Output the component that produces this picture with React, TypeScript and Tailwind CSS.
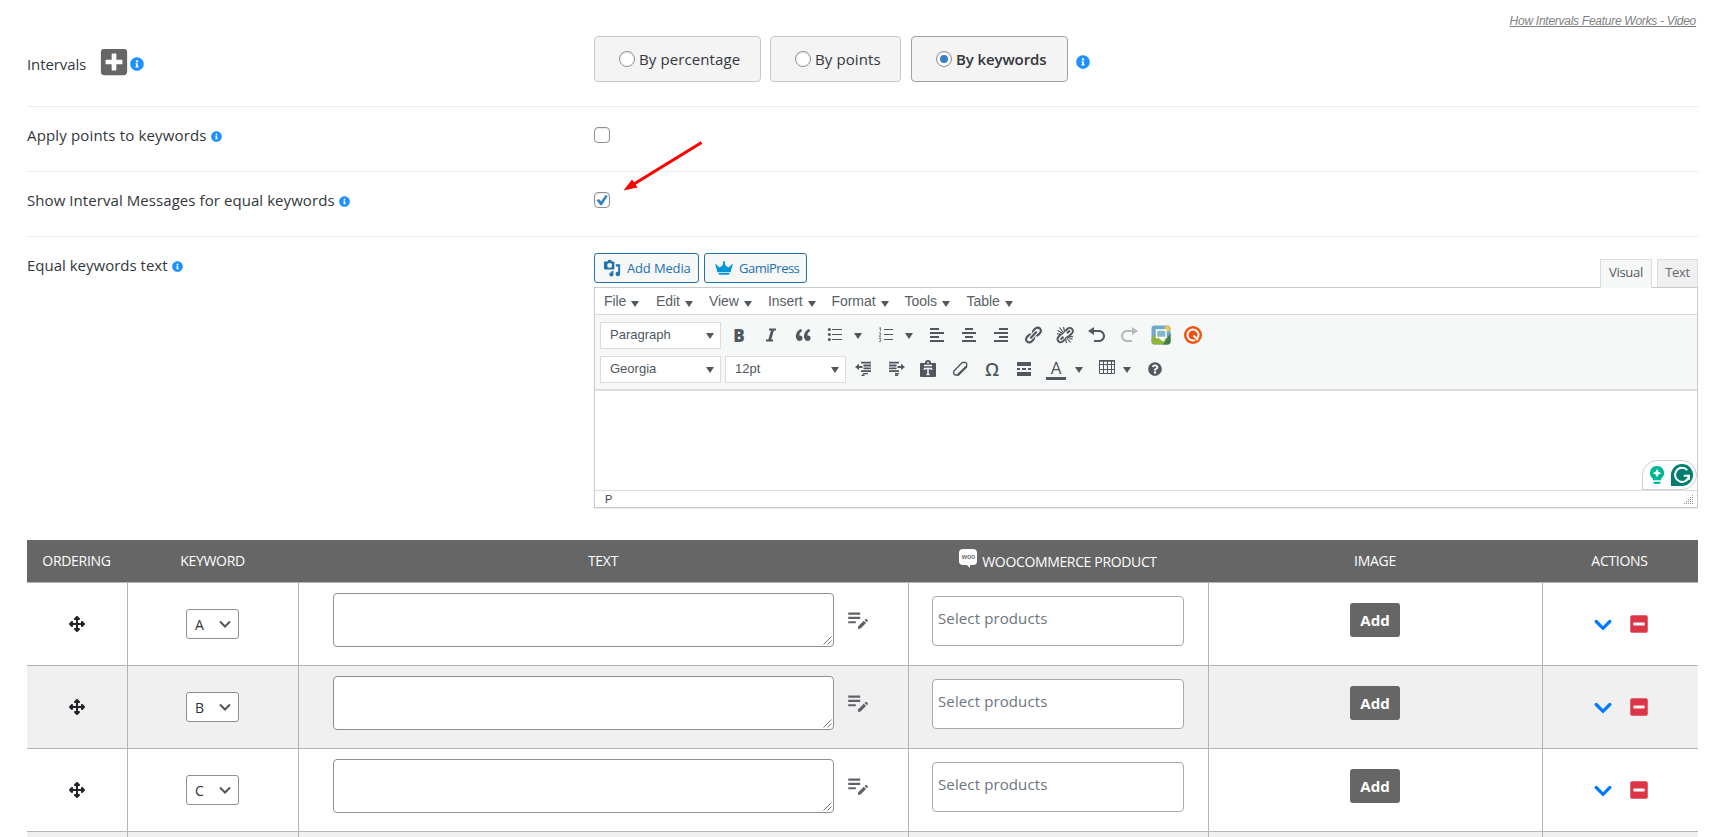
import { useState } from "react";
import { FaInfoCircle, FaMinusSquare, FaPlusSquare, FaQuestionCircle } from "react-icons/fa";
import { FaUpDownLeftRight } from "react-icons/fa6";
import { MdEditNote } from "react-icons/md";

const MENUS = [
  { label: "File", width: "w-[52px]" },
  { label: "Edit", width: "w-[53px]" },
  { label: "View", width: "w-[59px]" },
  { label: "Insert", width: "w-[63.5px]" },
  { label: "Format", width: "w-[73px]" },
  { label: "Tools", width: "w-[62px]" },
  { label: "Table", width: "w-[60px]" },
];

function Caret() {
  return <span className="block size-0 border-x-4 border-t-[6px] border-x-transparent border-t-[#50575e]" />;
}

function Icon({ d, className }: { d: string; className?: string }) {
  return (
    <svg viewBox="0 0 20 20" className={`size-5 ${className ?? "text-[#50575e]"}`} fill="currentColor">
      <path d={d} />
    </svg>
  );
}

function ToolButton({ children }: { children: React.ReactNode }) {
  return <button className="flex h-[30px] w-8 shrink-0 items-center justify-center text-[#50575e]">{children}</button>;
}

function SplitButton({ children, className }: { children: React.ReactNode; className: string }) {
  return (
    <div className={`flex h-[30px] shrink-0 items-center ${className}`}>
      <ToolButton>{children}</ToolButton>
      <span className="mt-0.5">
        <Caret />
      </span>
    </div>
  );
}

function ListBox({ label }: { label: string }) {
  return (
    <div className="flex h-[27px] w-[121px] shrink-0 items-center justify-between border border-[#dcdcde] bg-white pl-[9px] pr-[6px] text-[13px] text-[#50575e]">
      <span>{label}</span>
      <span className="mt-0.5">
        <Caret />
      </span>
    </div>
  );
}

function Info({ small }: { small?: boolean }) {
  return <FaInfoCircle className={`shrink-0 text-[#1e90ff] ${small ? "mt-0.5 size-[11px]" : "size-[14px]"}`} />;
}

function Radio({
  label,
  checked,
  onSelect,
  className,
  textClass,
}: {
  label: string;
  checked: boolean;
  onSelect: () => void;
  className: string;
  textClass: string;
}) {
  return (
    <label
      onClick={onSelect}
      className={`flex h-[46px] items-center rounded border bg-[#f4f4f4] pl-6 ${
        checked ? "border-[#a0a0a0]" : "border-[#c9c9c9]"
      } ${className}`}
    >
      <span className="flex size-4 shrink-0 items-center justify-center rounded-full border border-[#8c8f94] bg-white shadow-[inset_0_1px_2px_rgba(0,0,0,0.1)]">
        {checked && <span className="size-2 rounded-full bg-[#3582c4]" />}
      </span>
      <span className={`ml-1 whitespace-nowrap ${textClass}`}>{label}</span>
    </label>
  );
}

function CheckBox({ defaultChecked }: { defaultChecked?: boolean }) {
  const [checked, setChecked] = useState(!!defaultChecked);

  return (
    <button
      onClick={() => setChecked(!checked)}
      className="flex size-4 items-center justify-center rounded border border-[#8c8f94] bg-white shadow-[inset_0_1px_2px_rgba(0,0,0,0.1)]"
    >
      {checked && (
        <svg viewBox="0 0 14 14" className="size-3.5 shrink-0" fill="#3582c4">
          <path d="M1.500 7.200 3.800 6l2.300 2.200L10.600 2l2.100 1.100L6.900 12.300H5.400z" />
        </svg>
      )}
    </button>
  );
}

function Toolbar() {
  return (
    <div className="h-[76px] border-b-2 border-[#dcdcde] bg-[#f6f7f7] pl-[5px] pt-[5px]">
      <div className="flex h-[30px] items-center">
        <ListBox label="Paragraph" />
        <div className="ml-[2px] flex">
          <ToolButton>
            <span className="font-['Open_Sans',sans-serif] text-[17px] font-extrabold leading-none">B</span>
          </ToolButton>
          <ToolButton>
            <svg viewBox="0 0 20 20" className="size-5" stroke="currentColor" strokeWidth="2" fill="none">
              <path d="M8 4.500h7M5 15.500h7" />
              <path d="M11.700 4.500 8.500 15.500" strokeWidth="2.700" />
            </svg>
          </ToolButton>
          <ToolButton>
            <Icon d="M9.49 13.22c0-.74-.2-1.38-.61-1.9-.62-.78-1.83-.88-2.53-.72-.29-1.65 1.11-3.75 2.92-4.65L7.88 4c-2.73 1.3-5.42 4.28-4.96 8.05C3.21 14.43 4.59 16 6.54 16c.85 0 1.56-.25 2.12-.75s.83-1.18.83-2.03zm8.05 0c0-.74-.2-1.38-.61-1.9-.63-.78-1.83-.88-2.53-.72-.29-1.65 1.11-3.75 2.92-4.65L15.93 4c-2.73 1.3-5.41 4.28-4.95 8.05.29 2.38 1.66 3.95 3.61 3.95.85 0 1.56-.25 2.12-.75s.83-1.18.83-2.03z" />
          </ToolButton>
          <SplitButton className="w-[51px] gap-[3px]">
            <svg viewBox="0 0 20 20" className="size-5" fill="currentColor">
              <path d="M7 4h10v1H7zM7 9h10v1H7zM7 14h10v1H7z" />
              <circle cx="4.4" cy="4.5" r="1.5" />
              <circle cx="4.4" cy="9.5" r="1.5" />
              <circle cx="4.4" cy="14.5" r="1.5" />
            </svg>
          </SplitButton>
          <SplitButton className="w-[51px] gap-[3px]">
            <svg viewBox="0 0 20 20" className="size-5" stroke="currentColor" fill="none">
              <path d="M8 4.5h9M8 9.5h9M8 14.5h9" />
              <path d="M3.2 3.3 4.4 2.6v3.6M3 8h1.8v1.5L3.2 11.3H5M3 13.2h1.8L3.9 14.7l.9.8-.5 1.1H3" strokeWidth=".8" />
            </svg>
          </SplitButton>
          <ToolButton>
            <Icon d="M12 5V3H3v2h9zm5 4V7H3v2h14zm-5 4v-2H3v2h9zm5 4v-2H3v2h14z" />
          </ToolButton>
          <ToolButton>
            <Icon d="M14 5V3H6v2h8zm3 4V7H3v2h14zm-3 4v-2H6v2h8zm3 4v-2H3v2h14z" />
          </ToolButton>
          <ToolButton>
            <Icon d="M17 5V3H8v2h9zm0 4V7H3v2h14zm0 4v-2H8v2h9zm0 4v-2H3v2h14z" />
          </ToolButton>
          <ToolButton>
            <Icon d="M17.74 2.76c1.68 1.69 1.68 4.41 0 6.1l-1.53 1.52c-1.12 1.12-2.7 1.47-4.14 1.09l2.62-2.61.76-.77.76-.76c.84-.84.84-2.2 0-3.04-.84-.85-2.2-.85-3.04 0l-.77.76-3.38 3.38c-.37-1.44-.02-3.02 1.1-4.14l1.52-1.53c1.69-1.68 4.42-1.68 6.1 0zM8.59 13.43l5.34-5.34c.42-.42.42-1.1 0-1.52-.44-.43-1.13-.39-1.53 0l-5.33 5.34c-.42.42-.42 1.1 0 1.52.44.43 1.13.39 1.52 0zm-.76 2.29l4.14-4.15c.38 1.44.03 3.02-1.09 4.14l-1.52 1.53c-1.69 1.68-4.41 1.68-6.1 0-1.68-1.68-1.68-4.42 0-6.1l1.53-1.52c1.12-1.12 2.7-1.47 4.14-1.1l-4.14 4.15c-.85.84-.85 2.2 0 3.05.84.84 2.2.84 3.04 0z" />
          </ToolButton>
          <ToolButton>
            <svg viewBox="0 0 20 20" className="size-5" stroke="currentColor" fill="none" strokeWidth="2">
              <path d="m10.500 6 2-2.200a3.100 3.100 0 0 1 4.400 4.600L14 11.200M6 9.300l-2.500 2.500a3.100 3.100 0 0 0 4.400 4.600l2-2.300M12 8.200 15 5.500M5.500 14.500l3-2.800" />
              <path d="M2.500 5.500 8.500 8.800M4.500 2.500l4.300 5.500M8.500 2l1.300 5.500M2 8.800l5.500.6M17.500 14.500 11.500 11.300M15.500 17.500 11.200 12M11.500 18l-1.200-5.500M18 11.800l-5.500-.8" strokeWidth="1.200" />
            </svg>
          </ToolButton>
          <ToolButton>
            <Icon d="M12 5H7V2L1 6l6 4V7h5c2.2 0 4 1.8 4 4s-1.8 4-4 4H7v2h5c3.3 0 6-2.7 6-6s-2.7-6-6-6z" />
          </ToolButton>
          <ToolButton>
            <Icon
              className="text-[#b5b8bb]"
              d="M8 5h5V2l6 4-6 4V7H8c-2.2 0-4 1.8-4 4s1.8 4 4 4h5v2H8c-3.3 0-6-2.7-6-6s2.7-6 6-6z"
            />
          </ToolButton>
          <ToolButton>
            <svg viewBox="0 0 20 20" className="size-5">
              <rect x=".5" y=".5" width="19" height="19" rx="3" fill="#6fa8cf" />
              <circle cx="16.500" cy="3.500" r="3" fill="#e9c154" />
              <path d="M.5 13 6 8l13.500 5v4a3 3 0 0 1-3 2.500h-13a3 3 0 0 1-3-2.500z" fill="#8cb83a" />
              <path d="M12 19.500 19.500 8v9a3 3 0 0 1-3 2.500z" fill="#3f7d4c" />
              <path d="M5.500 5h9.500v7.500H5.500z" fill="#86b4c9" stroke="#fff" strokeWidth="1.400" />
              <path d="M7.500 12.500h7l-1.500 4-2.500-1z" fill="#fff" />
            </svg>
          </ToolButton>
          <ToolButton>
            <svg viewBox="0 0 20 20" className="size-5" fill="none">
              <circle cx="10" cy="10" r="9" fill="#f0530f" />
              <circle cx="10" cy="10" r="5.500" stroke="#fff" strokeWidth="2" />
              <path d="m11.500 13.500 3 3" stroke="#f0530f" strokeWidth="1.500" />
              <path d="m10.500 10.500 4.500 4.500" stroke="#fff" strokeWidth="2" />
            </svg>
          </ToolButton>
        </div>
      </div>
      <div className="mt-1 flex h-[30px] items-center">
        <ListBox label="Georgia" />
        <div className="w-1 shrink-0" />
        <ListBox label="12pt" />
        <div className="ml-0.5 flex">
          <ToolButton>
            <Icon d="M7 2.800h10v1.800H7zM9.500 5.600H17v1.800H9.500zM9.500 8.400H17v1.800H9.500zM7 11.200h10V13H7zM9 14h5v1.300H9zM7.500 15.600h3V17h-3zM5 4.800v2.100h3.500v2H5V11L1 7.900z" />
          </ToolButton>
          <ToolButton>
            <Icon d="M3 2.800h10v1.800H3zM3 5.600h7.500v1.800H3zM3 8.400h7.500v1.800H3zM3 11.200h10V13H3zM9 14h4v1.300H9zM9 15.600h3V17H9zM15 4.800v2.100h-3.500v2H15V11l4-3.100z" />
          </ToolButton>
          <ToolButton>
            <svg viewBox="0 0 20 20" className="size-5">
              <path d="M7 4a3 3 0 0 1 6 0h4a1 1 0 0 1 1 1v12a1 1 0 0 1-1 1H3a1 1 0 0 1-1-1V5a1 1 0 0 1 1-1z" fill="currentColor" />
              <path d="M6 6.500h8M6.500 11v-1.500h7V11M10 9.500v6M8.500 15.500h3" stroke="#f6f7f7" strokeWidth="1.500" fill="none" />
              <circle cx="10" cy="3.700" r=".9" fill="#f6f7f7" />
            </svg>
          </ToolButton>
          <ToolButton>
            <svg viewBox="0 0 20 20" className="size-5" fill="none" stroke="currentColor" strokeWidth="1.300">
              <path d="M12.300 3.500h3.400l1 1v3L8.500 16H5l-1.300-1.500v-2.200z" strokeLinejoin="round" />
              <path d="M7.500 16.200 16.500 7.500" strokeWidth="2.200" />
            </svg>
          </ToolButton>
          <ToolButton>
            <span className="font-['Open_Sans',sans-serif] text-[18px] font-semibold leading-none">Ω</span>
          </ToolButton>
          <ToolButton>
            <Icon d="M17 7V3H3v4h14zM6 11V9H3v2h3zm6 0V9H8v2h4zm5 0V9h-3v2h3zm0 6v-4H3v4h14z" />
          </ToolButton>
          <SplitButton className="w-[51px] gap-[3px]">
            <span className="mt-0.5 flex h-[19px] w-5 items-end justify-center border-b-[3px] border-[#50575e] pb-px text-[16px] leading-[15px]">
              A
            </span>
          </SplitButton>
          <SplitButton className="w-12">
            <svg viewBox="0 0 20 20" className="-mt-1 size-5" fill="none" stroke="currentColor">
              <path d="M2.500 3.500h15v13h-15zM2 7.500h16M2 12.500h16M6.500 4v12M10.500 4v12M14.500 4v12" />
              <path d="M2 4h16" strokeWidth="1.500" />
            </svg>
          </SplitButton>
          <ToolButton>
            <FaQuestionCircle className="size-3.5" />
          </ToolButton>
        </div>
      </div>
    </div>
  );
}

function Editor() {
  return (
    <div className="w-[1104px] pt-4">
      <div className="flex h-[34px] items-start justify-between">
        <div className="flex gap-[5px] text-[13px] text-[#2271b1]">
          <button className="flex h-[30px] w-[105px] shrink-0 items-center rounded-[3px] border border-[#2271b1] bg-[#f6f7f7] pl-2">
            <svg viewBox="0 0 20 20" className="size-[19px] shrink-0" fill="currentColor">
              <path
                fillRule="evenodd"
                d="M3 2.500h1.500l1-1.500h3l1 1.500H11a1 1 0 0 1 1 1V10a1 1 0 0 1-1 1H2a1 1 0 0 1-1-1V3.500a1 1 0 0 1 1-1zm4 1.700a2.600 2.600 0 1 0 0 5.200 2.600 2.600 0 0 0 0-5.200z"
              />
              <path d="M13.500 5.500H18V16a2.400 2.400 0 1 1-2-2.500V8h-2.500zM11 12.500v4A2.200 2.200 0 1 1 9 14v-1.500z" />
            </svg>
            <span className="ml-[5px] whitespace-nowrap tracking-[-0.15px]">Add Media</span>
          </button>
          <button className="flex h-[30px] w-[103px] shrink-0 items-center rounded-[3px] border border-[#2271b1] bg-[#f6f7f7] pl-[10px]">
            <svg viewBox="0 0 18 14" className="h-[14px] w-[18px] shrink-0" fill="#0096d6">
              <path d="M0 2.500 4.700 6.500 7.500 4.500 8.200 2.200 7.600 1.200 9 0l1.400 1.200-.6 1 .7 2.300 2.800 2L18 2.500l-2.500 8.700H2.500zM3 12h12l-1.500 1.700h-9z" />
            </svg>
            <span className="ml-1.5 whitespace-nowrap tracking-[-0.5px]">GamiPress</span>
          </button>
        </div>
        <div className="mt-1.5 flex gap-[5px] text-[13px]">
          <span className="relative z-10 flex h-[29px] w-[52px] items-center justify-center border border-b-0 border-[#dcdcde] bg-[#f6f7f7] pb-1 tracking-[-0.3px] text-[#50575e]">
            Visual
          </span>
          <span className="flex h-7 w-[41px] items-center justify-center border border-b-0 border-[#dcdcde] bg-[#f0f0f1] pb-[3px] tracking-[-0.3px] text-[#646970]">
            Text
          </span>
        </div>
      </div>
      <div className="border border-[#c9cacc] bg-white font-['Liberation_Sans',Arial,sans-serif] shadow-[0_1px_1px_rgba(0,0,0,0.08)]">
        <div className="flex h-[27px] items-center border-b border-[#dcdcde] pl-[9px] text-[14px] tracking-[-0.05px] text-[#595f66]">
          {MENUS.map((menu) => (
            <span key={menu.label} className={`flex shrink-0 items-center gap-[5px] ${menu.width}`}>
              {menu.label}
              <span className="mt-[5px]">
                <Caret />
              </span>
            </span>
          ))}
        </div>
        <Toolbar />
        <div className="flex h-[99px] items-end justify-end">
          <div className="flex h-[30px] w-[55px] items-center gap-1.5 rounded-t-[15px] rounded-br-[15px] border border-[#cdd0de] bg-white pl-1.5">
            <svg viewBox="0 0 16 20" className="h-[19px] w-4" fill="#00b793">
              <path d="M8 0a7.500 7.500 0 0 1 4.300 13.600V15H3.700v-1.400A7.500 7.500 0 0 1 8 0z" />
              <path d="M4.300 16.500h7.400v.5a2 2 0 0 1-2 2H6.300a2 2 0 0 1-2-2z" />
              <path d="m8 3 1.500 3 3 1.500-3 1.500-1.500 3-1.500-3-3-1.500 3-1.500z" fill="#fff" />
            </svg>
            <svg viewBox="0 0 22 22" className="size-[22px]" fill="none">
              <path d="M11 0a11 11 0 1 1 0 22H0V11A11 11 0 0 1 11 0z" fill="#027e6f" />
              <path d="M16.300 6.200A7 7 0 1 0 18 11.800h-5.300M18 11.800v4" stroke="#fff" strokeWidth="2" />
            </svg>
          </div>
        </div>
        <div className="flex h-[17px] items-center justify-between border-t border-[#dcdcde] pl-[10px] pr-[3px] text-[11px] text-[#3c434a]">
          <span>P</span>
          <svg viewBox="0 0 10 10" className="size-[10px]" stroke="#8c8f94" strokeDasharray="1 1">
            <path d="M0 9.500h10M2 7.500h8M4 5.500h6M6 3.500h4M8 1.500h2" />
          </svg>
        </div>
      </div>
    </div>
  );
}

function IntervalRow({ keyword, odd }: { keyword: string; odd: boolean }) {
  return (
    <tr className={`h-[83px] align-top ${odd ? "bg-[#f0f0f0]" : "bg-white"}`}>
      <td className="border-r border-t border-[#b4b4b4]">
        <FaUpDownLeftRight className="ml-[42px] mt-[33px] size-4 text-[#212529]" />
      </td>
      <td className="border-r border-t border-[#b4b4b4]">
        <div className="ml-[58px] mt-[26px] flex h-[30px] w-[53px] items-center justify-between rounded-[3px] border border-[#8c8f94] bg-white pl-2 pr-[7px] text-[14px] text-[#2c3338]">
          <span>{keyword}</span>
          <svg viewBox="0 0 12 8" className="h-2 w-3" fill="none" stroke="#555" strokeWidth="2">
            <path d="m1 1.500 5 5 5-5" />
          </svg>
        </div>
      </td>
      <td className="border-r border-t border-[#b4b4b4]">
        <div className="flex items-start pl-[34px] pt-[10px]">
          <div className="flex h-[54px] w-[501px] items-end justify-end rounded border border-[#8c8f94] bg-white p-px">
            <svg viewBox="0 0 9 9" className="size-[9px]" stroke="#555" strokeWidth=".8">
              <path d="m.5 8.500 8-8M4.500 8.500l4-4" />
            </svg>
          </div>
          <MdEditNote className="ml-[11px] mt-[13px] size-[26px] text-[#5f6368]" />
        </div>
      </td>
      <td className="border-r border-t border-[#b4b4b4]">
        <div className="ml-[23px] mt-[13px] h-[50px] w-[252px] rounded border border-[#a7a9ab] bg-white pl-[5px] pt-[9px] text-[15px] leading-6 tracking-[0.12px] text-[#6c757d]">
          Select products
        </div>
      </td>
      <td className="border-r border-t border-[#b4b4b4]">
        <button className="ml-[141px] mt-5 flex h-[34px] w-[50px] items-center justify-center rounded-[3px] bg-[#666] text-[15px] font-bold text-white">
          Add
        </button>
      </td>
      <td className="border-t border-[#b4b4b4]">
        <div className="flex items-center pl-[51px] pt-[31px]">
          <svg viewBox="0 0 18 18" className="mt-0.5 size-[18px]" fill="none" stroke="#007bff" strokeWidth="3.200" strokeLinecap="round">
            <path d="m2.200 5.500 6.800 6.800 6.800-6.800" />
          </svg>
          <FaMinusSquare className="ml-[17px] size-5 text-[#dc3545]" />
        </div>
      </td>
    </tr>
  );
}

export default function App() {
  const [mode, setMode] = useState("keywords");

  return (
    <div className="relative h-[837px] w-[1730px] overflow-hidden bg-white pl-[27px] font-['Open_Sans',sans-serif] text-[#32373c]">
      <a
        href="#"
        className="absolute right-[34px] top-3 font-['Liberation_Sans',Arial,sans-serif] text-[12px] italic leading-[18px] tracking-[-0.27px] text-[#808080] underline"
      >
        How Intervals Feature Works - Video
      </a>

      <div className="w-[1671px] text-[15px] leading-6">
        <div className="flex h-[107px] border-b border-[#ececec]">
          <div className="flex w-[567px] items-start">
            <span className="mt-[52px] tracking-[-0.1px]">Intervals</span>
            <FaPlusSquare className="ml-[13px] mt-[47px] size-[30px] text-[#666]" />
            <span className="ml-px mt-[57px]">
              <Info />
            </span>
          </div>
          <div className="flex items-start pt-9">
            <Radio
              label="By percentage"
              checked={mode === "percentage"}
              onSelect={() => setMode("percentage")}
              className="w-[167px]"
              textClass="tracking-[0.1px]"
            />
            <Radio
              label="By points"
              checked={mode === "points"}
              onSelect={() => setMode("points")}
              className="ml-[9px] w-[131px]"
              textClass="tracking-[0.1px]"
            />
            <Radio
              label="By keywords"
              checked={mode === "keywords"}
              onSelect={() => setMode("keywords")}
              className="ml-[10px] w-[157px]"
              textClass="font-semibold tracking-[-0.1px]"
            />
            <span className="ml-2 mt-[19px]">
              <Info />
            </span>
          </div>
        </div>

        <div className="flex h-[65px] border-b border-[#ececec]">
          <div className="mt-4 flex h-6 w-[567px] items-center gap-1">
            <span className="tracking-[0.16px]">Apply points to keywords</span>
            <Info small />
          </div>
          <div className="pt-5">
            <CheckBox />
          </div>
        </div>

        <div className="flex h-[65px] border-b border-[#ececec]">
          <div className="mt-4 flex h-6 w-[567px] items-center gap-1">
            <span className="tracking-[0.07px]">Show Interval Messages for equal keywords</span>
            <Info small />
          </div>
          <div className="relative pt-5">
            <CheckBox defaultChecked />
            <svg viewBox="0 0 80 50" className="absolute left-7 top-[-31px] h-[50px] w-20">
              <path d="M79.500 1.500 12 43" stroke="#f00" strokeWidth="3" />
              <path d="M1.500 49.500 10 38.500 15.500 46.500z" fill="#f00" />
            </svg>
          </div>
        </div>

        <div className="flex">
          <div className="mt-4 flex h-6 w-[567px] items-center gap-1">
            <span>Equal keywords text</span>
            <Info small />
          </div>
          <Editor />
        </div>
      </div>

      <table className="mt-8 w-[1671px] table-fixed border-separate border-spacing-0">
        <colgroup>
          <col className="w-[101px]" />
          <col className="w-[171px]" />
          <col className="w-[610px]" />
          <col className="w-[300px]" />
          <col className="w-[334px]" />
          <col className="w-[155px]" />
        </colgroup>
        <thead>
          <tr className="h-[42px] bg-[#666] text-[14px] text-white *:p-0 *:pb-0.5 *:pr-0.5 *:font-normal">
            <th className="tracking-[-0.3px]">ORDERING</th>
            <th className="tracking-[-0.3px]">KEYWORD</th>
            <th className="tracking-[-0.3px]">TEXT</th>
            <th>
              <div className="flex items-center justify-center gap-[5px] tracking-[-0.35px]">
                <span className="relative -mt-1.5 flex h-4 w-[18px] items-center justify-center rounded-sm bg-white text-[7px] font-semibold tracking-[-0.3px] text-[#666]">
                  woo
                  <span className="absolute left-2 top-4 size-0 border-l-[3px] border-t-[3px] border-l-transparent border-t-white" />
                </span>
                <span className="mt-0.5">WOOCOMMERCE PRODUCT</span>
              </div>
            </th>
            <th className="tracking-[-0.3px]">IMAGE</th>
            <th className="tracking-[-0.3px]">ACTIONS</th>
          </tr>
        </thead>
        <tbody>
          {["A", "B", "C"].map((keyword, index) => (
            <IntervalRow key={keyword} keyword={keyword} odd={index % 2 === 1} />
          ))}
          <tr className="h-[6px] bg-[#f0f0f0] *:border-r *:border-t *:border-[#b4b4b4] *:last:border-r-0">
            <td />
            <td />
            <td />
            <td />
            <td />
            <td />
          </tr>
        </tbody>
      </table>
    </div>
  );
}
